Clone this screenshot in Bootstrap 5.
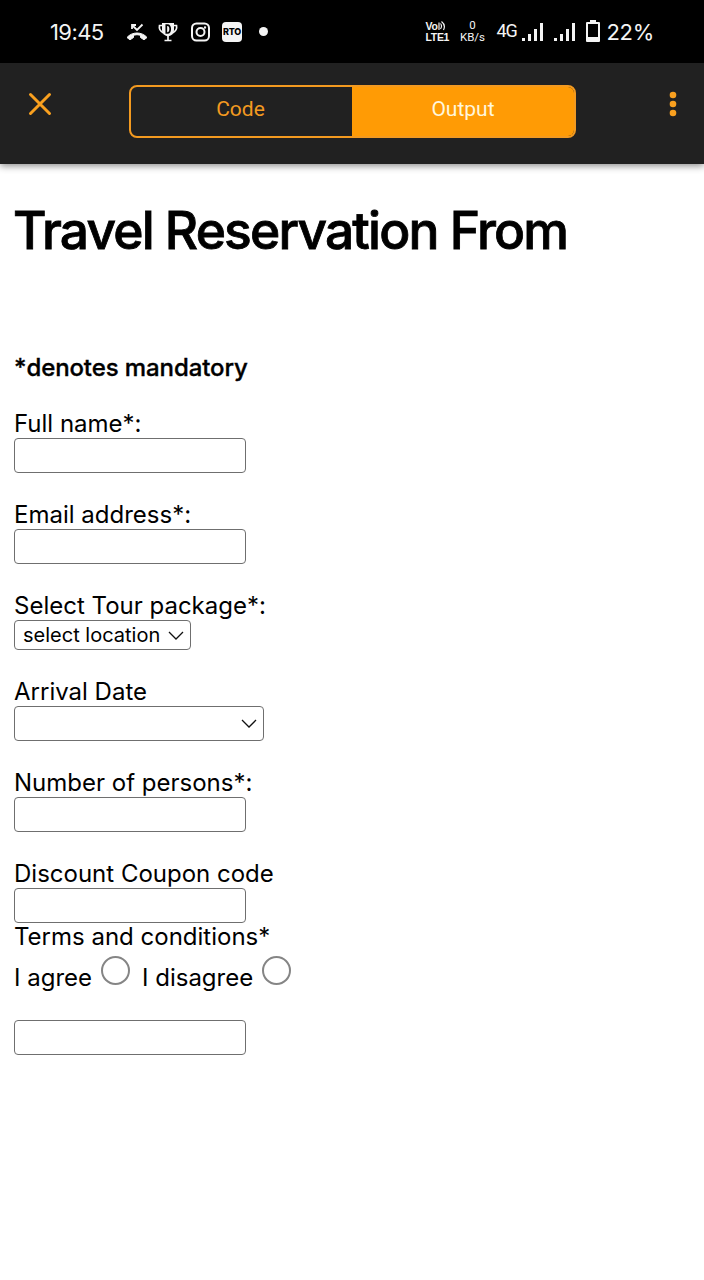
<!DOCTYPE html>
<html lang="en">
<head>
<meta charset="utf-8">
<meta name="viewport" content="width=device-width, initial-scale=1">
<title>Travel Reservation</title>
<link href="https://cdn.jsdelivr.net/npm/bootstrap@5.3.0/dist/css/bootstrap.min.css" rel="stylesheet">
<style>
body{font-family:Inter,"Liberation Sans",sans-serif;color:#000;background:#fff;min-height:1280px}
.status{height:63px;background:#000;color:#f4f4f4;padding:0 50px}
.status svg{flex:none;display:block}
.clock{font-size:22px;line-height:30px;width:76px;letter-spacing:-.6px}
.trophy{margin-left:9px}
.insta{margin-left:9px}
.rto{width:20px;height:20px;margin-left:10px;border-radius:4px;background:#f4f4f4;color:#000;font-size:9px;font-weight:800;line-height:20px;text-align:center;letter-spacing:-.3px}
.dot{width:9px;height:9px;margin-left:17px;border-radius:50%;background:#f4f4f4}
.tiny{font-size:11px;line-height:12.5px;text-align:center;white-space:nowrap;flex:none}
.volte{width:25px;font:600 10.5px/11px "Liberation Sans",sans-serif;text-align:left;letter-spacing:-.3px}
.speed{width:26px;margin-left:9px;font-family:Roboto,sans-serif;padding-bottom:1px;font-size:11.5px}
.net{width:26px;margin-left:11px;font:400 18px/22px Roboto,sans-serif;letter-spacing:-1px;padding-bottom:1px}
.bars2,.battery{margin-left:11px}
.pct{margin-left:6px;font-size:22px;line-height:30px;letter-spacing:-.3px}
.appbar{height:101px;background:#212121;box-shadow:0 2px 7px rgba(0,0,0,.45);padding:22px 26px 0 28px}
.appbar svg{flex:none;display:block}
.close-x{margin-top:7px}
.dots{margin-top:6px}
.switch{width:447px;height:53px;margin-left:77px;border:2px solid #f39a20;border-radius:8px;overflow:hidden}
.switch button{border:0;background:none;width:221px;padding:0 2px 6px 0;font:400 21px/24px Roboto,sans-serif;color:#f39a20}
.switch .on{background:#ff9b05;color:#fff6dc;width:222px;padding-right:0}
.page{padding:35px 14px 0}
h1{font-size:51.5px;font-weight:500;-webkit-text-stroke:.8px #000;line-height:62px;margin:0 0 91px -1px;letter-spacing:-1.8px;white-space:nowrap}
.note{font-size:24px;font-weight:500;-webkit-text-stroke:.35px #000;line-height:31px;margin:0 0 25px;letter-spacing:-.1px}
.field{margin-bottom:26px}
.lab{display:block;width:max-content;font-size:24px;font-weight:400;line-height:29px;padding-top:1px;height:30px;white-space:nowrap}
.box{display:block;width:232px;height:35px;border:1px solid #6f6f6f;border-radius:4px;background:#fff;padding:0}
.pick{width:177px;height:30px;font-size:20px;line-height:28px;padding:0 6px 0 8px}
.date{width:250px;padding-right:6px}
.terms{height:28px;line-height:28px;padding:0}
.choices{height:69px;padding-top:5px}
.choices .lab{padding-top:7px;height:41px}
.choices input{flex:none;width:29px;height:29px;border:2px solid #858585;border-radius:50%;appearance:none;background:#fff;margin:0 0 0 9px}
.choices input+.lab{margin-left:12px}
</style>
</head>
<body>
<div class="status d-flex align-items-center">
  <div class="clock">19:45</div>
  <svg width="22" height="18" viewBox="0 0 22 18" fill="#f4f4f4"><path d="M1 14.500C6 8.500 16 8.500 21 14.500L18 16.800 14.500 14.500V12.200Q11 11.200 7.500 12.200V14.500L4 16.800Z" stroke="#f4f4f4" stroke-linejoin="round"/><path d="M6 6V2H10M6.500 2.500L11 7L16.500 1.500" fill="none" stroke="#f4f4f4" stroke-width="1.8"/></svg>
  <svg class="trophy" width="22" height="20" viewBox="0 0 22 20"><path d="M5 1H17V8Q17 13 11 14.500Q5 13 5 8Z" fill="#f4f4f4"/><path d="M5 3.500H2.500Q1.500 8.500 6.500 11M17 3.500H19.500Q20.500 8.500 15.500 11M11 13V18M7.500 18.500H14.500" fill="none" stroke="#f4f4f4" stroke-width="1.700"/><path d="M9.300 3.200V11H10.500Q13.200 10.800 13.200 7T10.500 3.200Z" fill="none" stroke="#000" stroke-width="1.700"/></svg>
  <svg class="insta" width="24" height="20" viewBox="-3 0 24 20" fill="none" stroke="#f4f4f4" stroke-width="2"><rect x="1" y="1.500" width="17" height="17" rx="4.500"/><circle cx="9.500" cy="10" r="4"/><circle cx="14" cy="5.500" r=".6" stroke-width="1.200"/></svg>
  <div class="rto">RTO</div>
  <div class="dot"></div>
  <div class="ms-auto d-flex align-items-center">
    <div class="tiny volte"><div class="d-flex">Vo<svg width="8" height="10" viewBox="0 0 8 10" fill="none" stroke="#f4f4f4" stroke-width="1.200"><path d="M1 1.500V9M2.500 2.500Q4.500 5 2.500 8M3.500 .5Q8 4 5.500 9"/></svg></div>LTE1</div>
    <div class="tiny speed">0<br>KB/s</div>
    <div class="net">4G</div>
    <svg width="21" height="20" viewBox="0 0 21 20" fill="#f4f4f4"><path d="M0 16h3v3H0zM6 12h3v7H6zM12 7h3v12h-3zM18 1h3v18h-3z"/></svg>
    <svg class="bars2" width="21" height="20" viewBox="0 0 21 20" fill="#f4f4f4"><path d="M0 16h3v3H0zM6 12h3v7H6zM12 7h3v12h-3zM18 1h3v18h-3z"/></svg>
    <svg class="battery" width="14" height="26" viewBox="0 0 14 24"><path fill="#f4f4f4" fill-rule="evenodd" d="M4 0h6v2h3q1 0 1 1v18q0 1-1 1H1q-1 0-1-1V3q0-1 1-1h3zM2 4v13h10V4z"/></svg>
    <div class="pct">22%</div>
  </div>
</div>
<header class="appbar d-flex align-items-start">
  <svg class="close-x" width="24" height="24" viewBox="0 0 24 24" fill="none" stroke="#f9a01f" stroke-width="3" stroke-linecap="round"><path d="M2.500 2.500L21.500 21.500M21.500 2.500L2.500 21.500"/></svg>
  <div class="switch d-flex"><button>Code</button><button class="on">Output</button></div>
  <svg class="dots ms-auto" width="10" height="26" viewBox="0 0 10 26" fill="#f9a01f"><circle cx="5" cy="4" r="3.300"/><circle cx="5" cy="13" r="3.300"/><circle cx="5" cy="22" r="3.300"/></svg>
</header>
<main class="page">
<h1>Travel Reservation From</h1>
<p class="note">*denotes mandatory</p>
<div class="field"><label class="lab" for="name">Full name*:</label><input class="box" id="name"></div>
<div class="field"><label class="lab" for="email">Email address*:</label><input class="box" id="email"></div>
<div class="field"><label class="lab">Select Tour package*:</label><div class="box pick d-flex justify-content-between align-items-center"><span>select location</span><svg width="16" height="9" viewBox="0 0 16 9" fill="none" stroke="#111" stroke-width="1.300"><path d="M1 1L8 8L15 1"/></svg></div></div>
<div class="field"><label class="lab">Arrival Date</label><div class="box date d-flex justify-content-end align-items-center"><svg width="16" height="9" viewBox="0 0 16 9" fill="none" stroke="#111" stroke-width="1.300"><path d="M1 1L8 8L15 1"/></svg></div></div>
<div class="field"><label class="lab" for="count">Number of persons*:</label><input class="box" id="count"></div>
<div><label class="lab" for="coupon">Discount Coupon code</label><input class="box" id="coupon"></div>
<div class="lab terms">Terms and conditions*</div>
<div class="choices d-flex align-items-start"><label class="lab" for="yes">I agree</label><input type="radio" id="yes" name="terms"><label class="lab" for="no">I disagree</label><input type="radio" id="no" name="terms"></div>
<input class="box">
</main>
<script src="https://cdn.jsdelivr.net/npm/bootstrap@5.3.0/dist/js/bootstrap.bundle.min.js"></script>
</body>
</html>
